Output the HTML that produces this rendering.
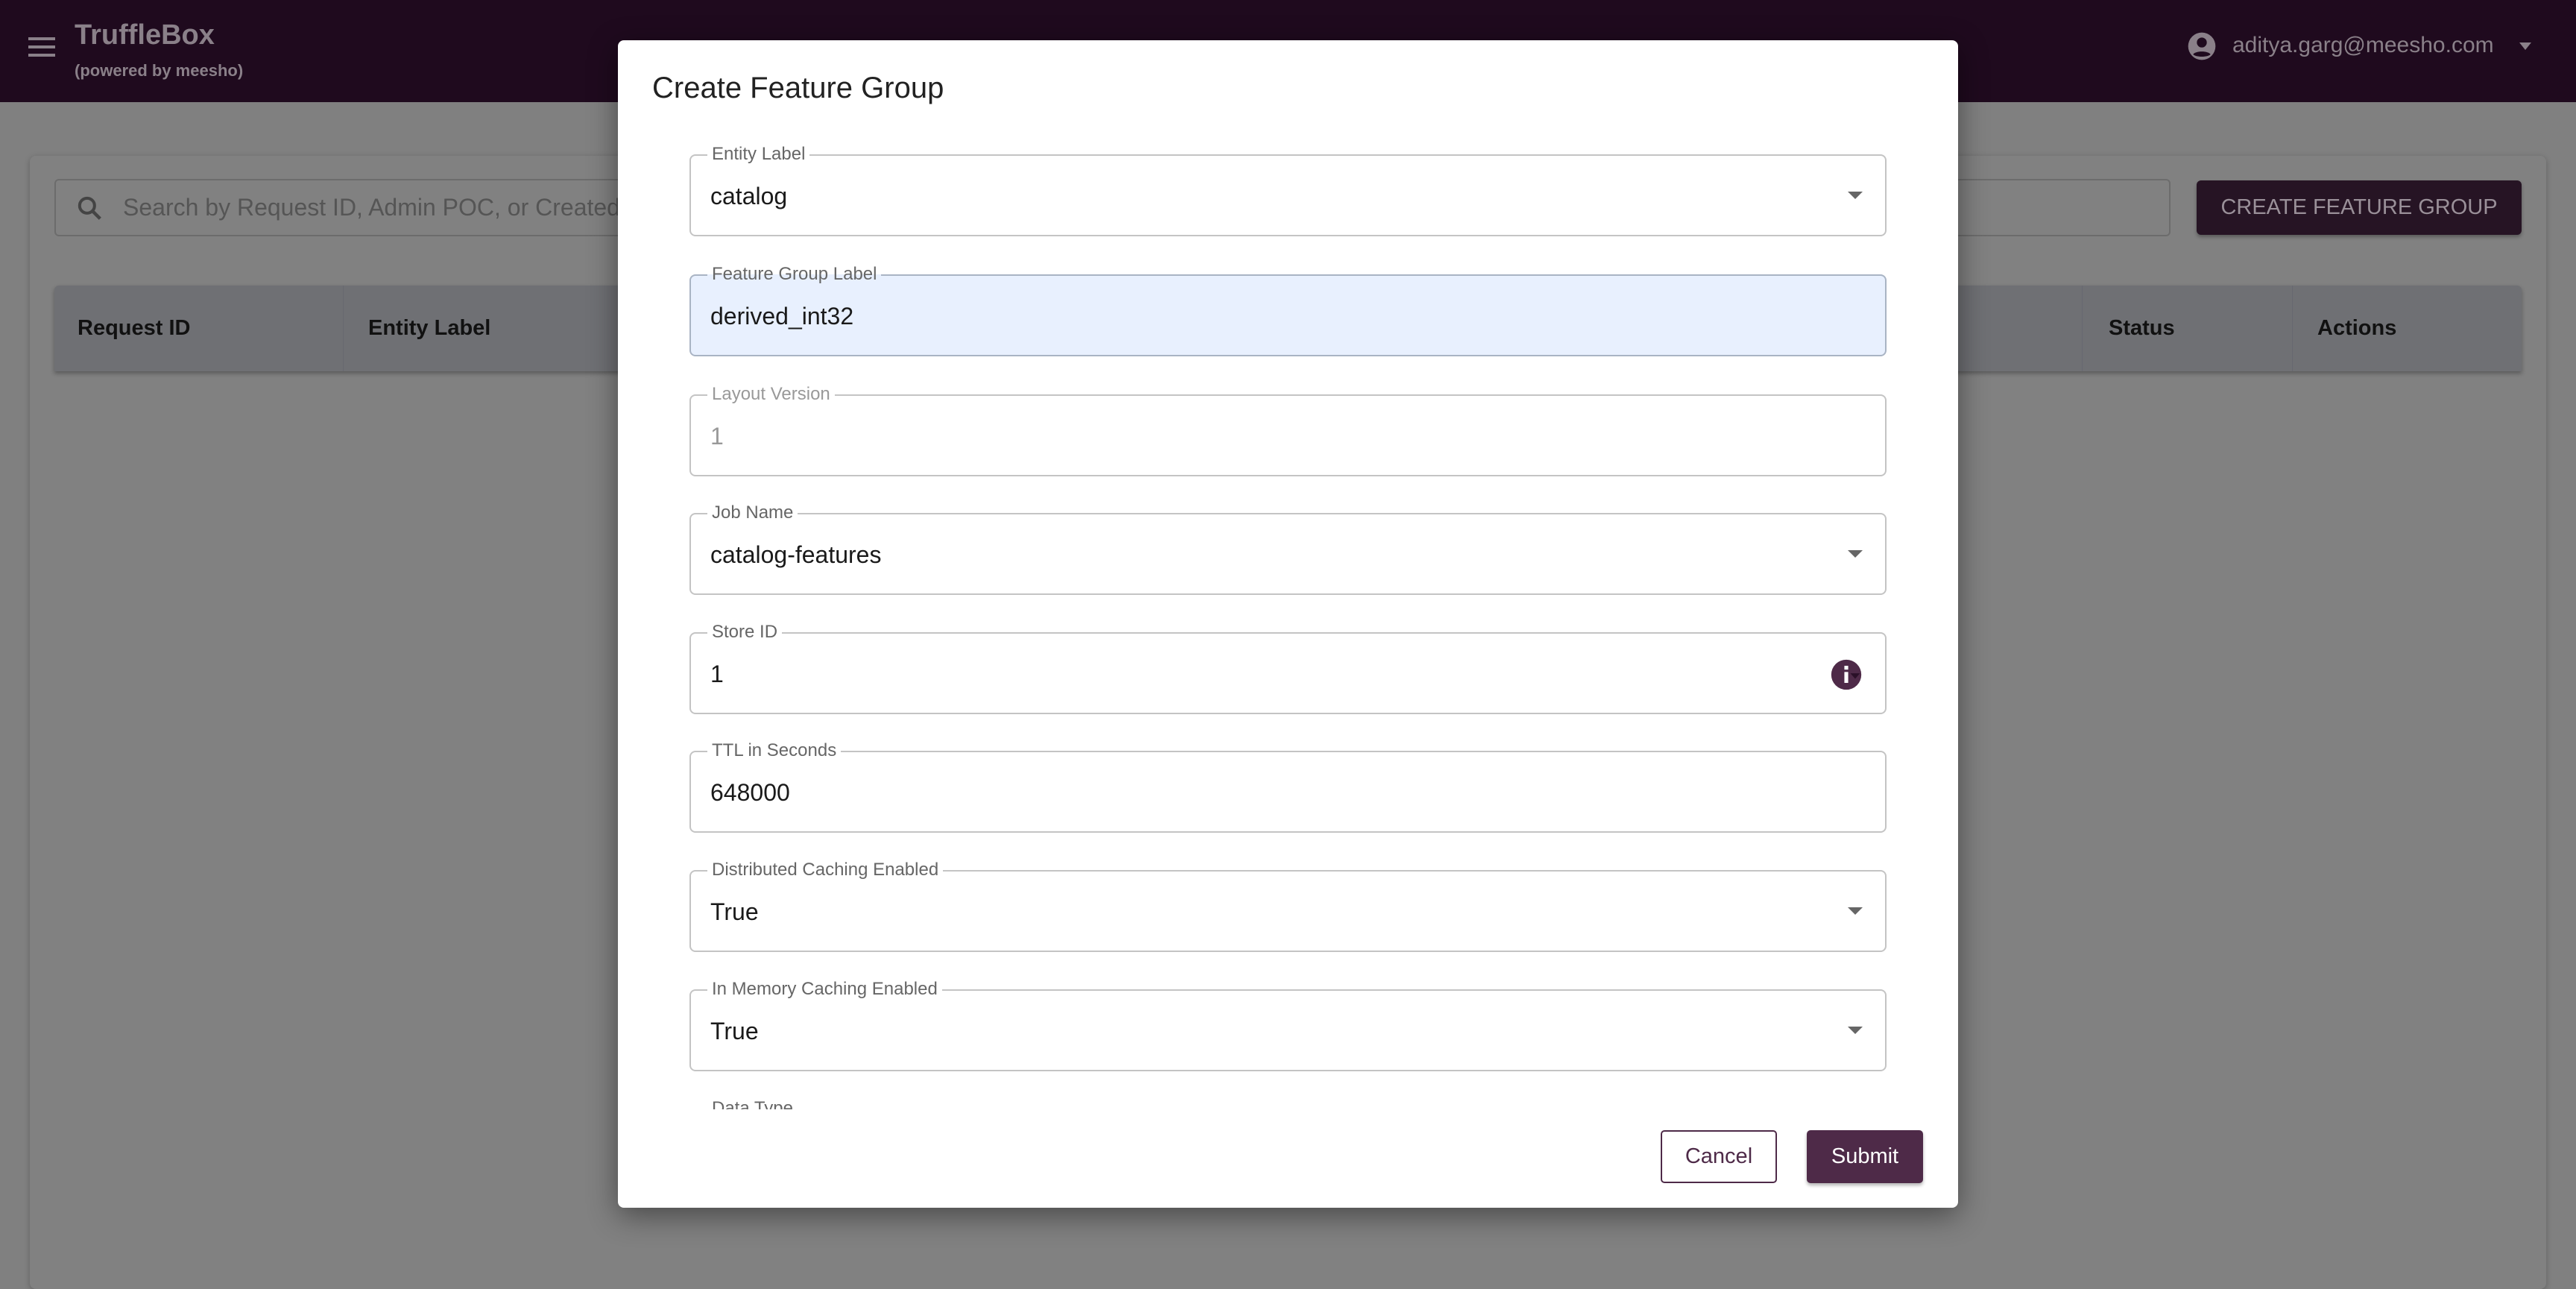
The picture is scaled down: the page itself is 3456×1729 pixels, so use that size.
<!DOCTYPE html>
<html><head><meta charset="utf-8"><style>
*{box-sizing:border-box;margin:0;padding:0}
body{width:3456px;height:1680px;overflow:hidden;background:#808080;font-family:"Liberation Sans",Arial,sans-serif;position:relative}
.nav{position:absolute;left:0;top:0;width:3456px;height:137px;background:#1f0a1e}
.card{position:absolute;left:40px;top:209px;width:3376px;height:1520px;background:#818181;border-radius:8px;box-shadow:0 2px 8px rgba(0,0,0,.25)}
.search{position:absolute;left:73px;top:240px;width:2839px;height:77px;border:2px solid #6c6c6c;border-radius:6px}
.btn{position:absolute;left:2947px;top:242px;width:436px;height:73px;background:#261424;border-radius:6px;color:#9a9099;font-size:29px;line-height:73px;text-align:center;box-shadow:0 3px 5px rgba(0,0,0,.3)}
.th{position:absolute;left:73px;top:383px;width:3310px;height:115px;background:#6f7074;border-radius:6px 6px 0 0;box-shadow:0 3px 6px rgba(0,0,0,.3)}
.th span{position:absolute;top:0;line-height:115px;font-size:29px;font-weight:bold;color:#111}
.th i{position:absolute;top:0;width:1px;height:115px;background:#676870}
.modal{position:absolute;left:829px;top:54px;width:1798px;height:1566px;background:#fff;border-radius:8px;box-shadow:0 10px 40px rgba(0,0,0,.45)}
.title{position:absolute;left:46px;top:42px;font-size:40px;color:#222}
.clip{position:absolute;left:0;top:120px;width:1798px;height:1314px;overflow:hidden}
.f{position:absolute;left:96px;width:1606px;height:110px;border:2px solid #c4c4c4;border-radius:8px}
.f .l{position:absolute;left:22px;top:-16px;background:#fff;padding:0 6px;font-size:24px;color:#666;line-height:28px}
.f .v{position:absolute;left:26px;top:36px;font-size:32px;color:#1a1a1a;line-height:36px}
.f .a{position:absolute;right:30px;top:48px;width:0;height:0;border-left:10px solid transparent;border-right:10px solid transparent;border-top:10px solid #666}
.cancel{position:absolute;left:1399px;top:1462px;width:156px;height:71px;border:2px solid #4e2a48;border-radius:5px;color:#4e2a48;font-size:29px;text-align:center;line-height:67px}
.submit{position:absolute;left:1595px;top:1462px;width:156px;height:71px;background:#4e2a48;border-radius:5px;color:#fff;font-size:29px;text-align:center;line-height:71px;box-shadow:0 3px 5px rgba(0,0,0,.3)}
</style></head><body>
<div class="nav">
<div style="position:absolute;left:38px;top:50px;width:36px;height:4px;background:#8a8089;box-shadow:0 11px 0 #8a8089,0 22px 0 #8a8089"></div>
<div style="position:absolute;left:100px;top:26px;font-size:38px;font-weight:bold;color:#8a8089">TruffleBox</div>
<div style="position:absolute;left:100px;top:82px;font-size:22px;font-weight:bold;color:#8a8089">(powered by meesho)</div>
<svg style="position:absolute;left:2934px;top:42px" width="40" height="40" viewBox="0 0 24 24"><circle cx="12" cy="12" r="11" fill="#8a8089"/><circle cx="12" cy="9" r="4" fill="#1f0a1e"/><path d="M5 18.5c2-3 12-3 14 0c-2 2.5-12 2.5-14 0z" fill="#1f0a1e"/></svg>
<div style="position:absolute;left:2995px;top:44px;font-size:30px;color:#8a8089">aditya.garg@meesho.com</div>
<div style="position:absolute;left:3380px;top:57px;border-left:8px solid transparent;border-right:8px solid transparent;border-top:10px solid #8a8089"></div>
</div>
<div class="card"></div>
<div class="search">
<svg style="position:absolute;left:26px;top:18px" width="40" height="40" viewBox="0 0 24 24"><circle cx="9.5" cy="9.5" r="6" fill="none" stroke="#444" stroke-width="2.4"/><path d="M14 14l6 6" stroke="#444" stroke-width="2.6"/></svg>
<div style="position:absolute;left:90px;top:18px;font-size:32px;color:#555">Search by Request ID, Admin POC, or Created</div>
</div>
<div class="btn">CREATE FEATURE GROUP</div>
<div class="th"><span style="left:31px">Request ID</span><i style="left:387px"></i><span style="left:421px">Entity Label</span><i style="left:2720px"></i><span style="left:2756px">Status</span><i style="left:3002px"></i><span style="left:3036px">Actions</span></div>
<div class="modal">
<div class="title">Create Feature Group</div>
<div class="clip">
<div class="f" style="top:33px"><div class="l">Entity Label</div><div class="v">catalog</div><div class="a"></div></div>
<div class="f" style="top:194px;background:#e8f0fe;border-color:#a9b4c4"><div class="l" style="background:linear-gradient(#fff 50%,#e8f0fe 50%)">Feature Group Label</div><div class="v">derived_int32</div></div>
<div class="f" style="top:355px"><div class="l" style="color:#999">Layout Version</div><div class="v" style="color:#999">1</div></div>
<div class="f" style="top:514px"><div class="l">Job Name</div><div class="v">catalog-features</div><div class="a"></div></div>
<div class="f" style="top:674px"><div class="l">Store ID</div><div class="v">1</div>
<svg style="position:absolute;right:30px;top:33px" width="44" height="44" viewBox="0 0 24 24"><circle cx="12" cy="12" r="11" fill="#4e2a48"/><rect x="10.6" y="10" width="2.8" height="8" fill="#fff"/><rect x="10.6" y="5.5" width="2.8" height="2.8" fill="#fff"/><path d="M15 11h7l-3.5 4z" fill="#2a1028"/></svg></div>
<div class="f" style="top:833px"><div class="l">TTL in Seconds</div><div class="v">648000</div></div>
<div class="f" style="top:993px"><div class="l">Distributed Caching Enabled</div><div class="v">True</div><div class="a"></div></div>
<div class="f" style="top:1153px"><div class="l">In Memory Caching Enabled</div><div class="v">True</div><div class="a"></div></div>
<div class="f" style="top:1313px;border-color:#fff"><div class="l" style="color:#666">Data Type</div></div>
</div>
<div class="cancel">Cancel</div>
<div class="submit">Submit</div>
</div>
</body></html>
